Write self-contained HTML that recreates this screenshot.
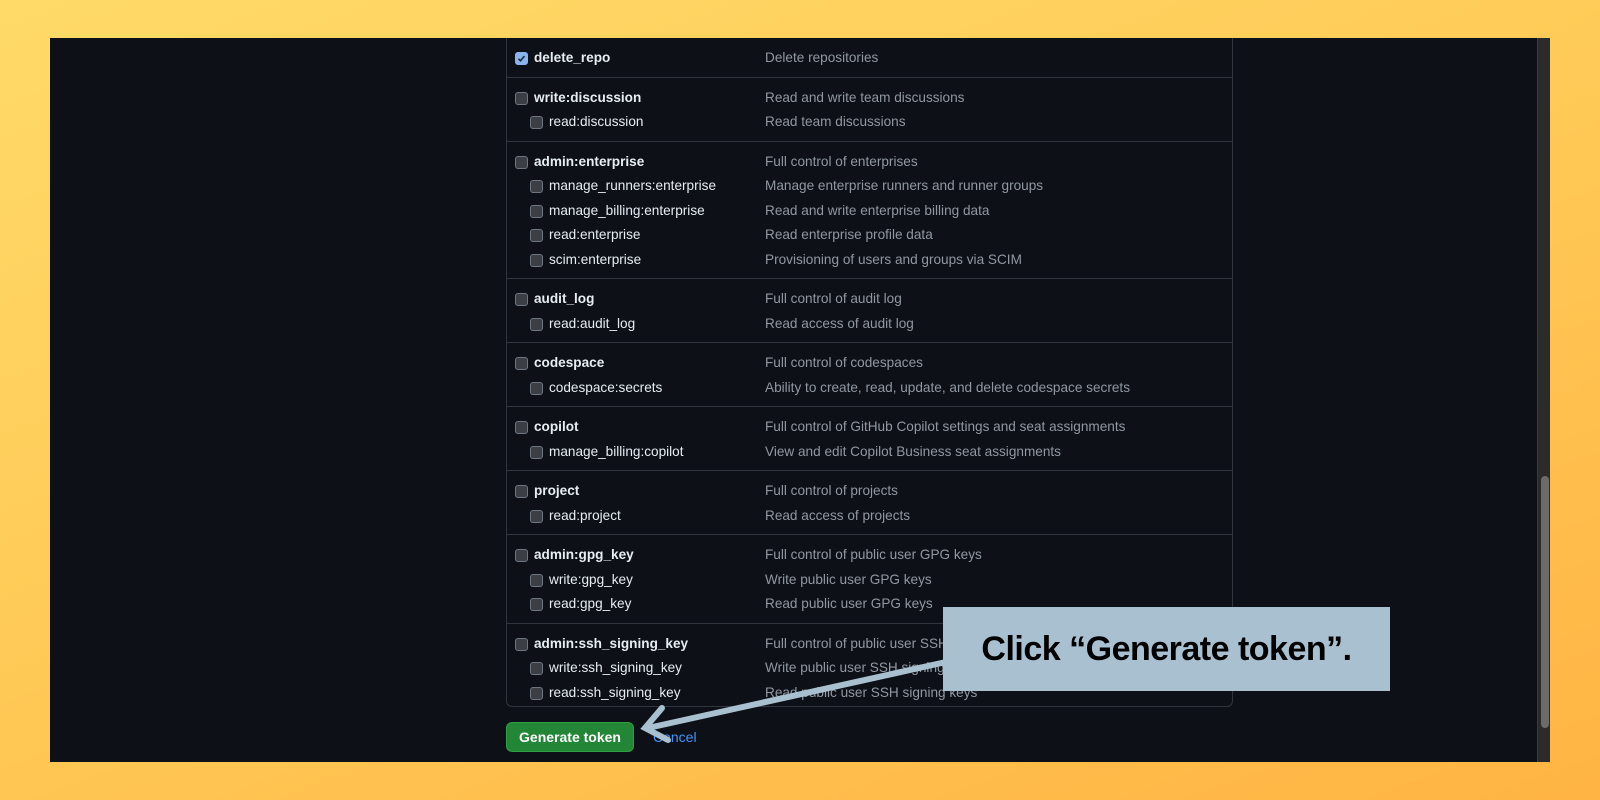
<!DOCTYPE html>
<html><head><meta charset="utf-8"><style>
*{margin:0;padding:0;box-sizing:border-box}
body{width:1600px;height:800px;overflow:hidden;background:linear-gradient(160deg,#ffda68 0%,#ffc956 50%,#ffb443 100%);font-family:"Liberation Sans",sans-serif;position:relative}
.panel{position:absolute;left:50px;top:38px;width:1500px;height:724px;background:#0d1117;overflow:hidden}
.sb{position:absolute;right:0;top:0;width:13px;height:100%;background:#2b2b2b;border-left:1px solid #3a3a3a}
.thumb{position:absolute;left:3px;top:438px;width:8px;height:252px;border-radius:4px;background:#6b6b6b}
.box{position:absolute;left:456px;top:0;width:727px;height:669px;border:1px solid #30363d;border-top:none;border-radius:0 0 6px 6px}
.g{padding:8px 0 6px;border-top:1px solid #30363d}
.g:first-child{border-top:none}
.r{height:24.5px;line-height:24.5px;font-size:13.6px;position:relative;color:#e6edf3}
.r .cb{position:absolute;left:8px;top:6px;width:13px;height:13px;border-radius:3px;background:#3b3f45;border:1px solid #6e7681}
.r .l{position:absolute;left:27px;font-weight:bold}
.r.c .cb{left:23px}
.r.c .l{left:42px;font-weight:normal}
.r .d{position:absolute;left:258px;color:#9198a1}
.cb.on{background:#8ab4f0;border-color:#8ab4f0}
.cb.on svg{position:absolute;left:0;top:0}
.btn{position:absolute;left:456px;top:684px;width:128px;height:30px;background:#238636;border:1px solid #2ea043;border-radius:6px;color:#fff;font-size:14px;font-weight:bold;text-align:center;line-height:28px}
.cancel{position:absolute;left:603px;top:684px;line-height:30px;color:#4493f8;font-size:14px}
.call{position:absolute;left:943px;top:607px;width:447px;height:84px;background:#a8c0d0;color:#000;font-weight:bold;font-size:34px;text-align:center;line-height:84px;letter-spacing:-0.5px}
</style></head><body>
<div class="panel">
<div class="box">
<div class="g"><div class="r"><span class="cb on"><svg width="11" height="11" viewBox="0 0 11 11"><path d="M2.5 5.8 L4.5 7.8 L8.5 3" stroke="#1d2a3a" stroke-width="1.6" fill="none"/></svg></span><span class="l">delete_repo</span><span class="d">Delete repositories</span></div></div>
<div class="g"><div class="r"><span class="cb"></span><span class="l">write:discussion</span><span class="d">Read and write team discussions</span></div>
<div class="r c"><span class="cb"></span><span class="l">read:discussion</span><span class="d">Read team discussions</span></div></div>
<div class="g"><div class="r"><span class="cb"></span><span class="l">admin:enterprise</span><span class="d">Full control of enterprises</span></div>
<div class="r c"><span class="cb"></span><span class="l">manage_runners:enterprise</span><span class="d">Manage enterprise runners and runner groups</span></div>
<div class="r c"><span class="cb"></span><span class="l">manage_billing:enterprise</span><span class="d">Read and write enterprise billing data</span></div>
<div class="r c"><span class="cb"></span><span class="l">read:enterprise</span><span class="d">Read enterprise profile data</span></div>
<div class="r c"><span class="cb"></span><span class="l">scim:enterprise</span><span class="d">Provisioning of users and groups via SCIM</span></div></div>
<div class="g"><div class="r"><span class="cb"></span><span class="l">audit_log</span><span class="d">Full control of audit log</span></div>
<div class="r c"><span class="cb"></span><span class="l">read:audit_log</span><span class="d">Read access of audit log</span></div></div>
<div class="g"><div class="r"><span class="cb"></span><span class="l">codespace</span><span class="d">Full control of codespaces</span></div>
<div class="r c"><span class="cb"></span><span class="l">codespace:secrets</span><span class="d">Ability to create, read, update, and delete codespace secrets</span></div></div>
<div class="g"><div class="r"><span class="cb"></span><span class="l">copilot</span><span class="d">Full control of GitHub Copilot settings and seat assignments</span></div>
<div class="r c"><span class="cb"></span><span class="l">manage_billing:copilot</span><span class="d">View and edit Copilot Business seat assignments</span></div></div>
<div class="g"><div class="r"><span class="cb"></span><span class="l">project</span><span class="d">Full control of projects</span></div>
<div class="r c"><span class="cb"></span><span class="l">read:project</span><span class="d">Read access of projects</span></div></div>
<div class="g"><div class="r"><span class="cb"></span><span class="l">admin:gpg_key</span><span class="d">Full control of public user GPG keys</span></div>
<div class="r c"><span class="cb"></span><span class="l">write:gpg_key</span><span class="d">Write public user GPG keys</span></div>
<div class="r c"><span class="cb"></span><span class="l">read:gpg_key</span><span class="d">Read public user GPG keys</span></div></div>
<div class="g"><div class="r"><span class="cb"></span><span class="l">admin:ssh_signing_key</span><span class="d">Full control of public user SSH signing keys</span></div>
<div class="r c"><span class="cb"></span><span class="l">write:ssh_signing_key</span><span class="d">Write public user SSH signing keys</span></div>
<div class="r c"><span class="cb"></span><span class="l">read:ssh_signing_key</span><span class="d">Read public user SSH signing keys</span></div></div>
</div>
<div class="btn">Generate token</div>
<div class="cancel">Cancel</div>
<div class="sb"><div class="thumb"></div></div>
</div>
<svg style="position:absolute;left:0;top:0" width="1600" height="800">
<g stroke="#a8c0d0" stroke-width="6" stroke-linecap="round" fill="none">
<line x1="946" y1="662" x2="648" y2="728"/>
<polyline points="662,708 645,728 668,740"/>
</g>
</svg>
<div class="call">Click “Generate token”.</div>
</body></html>
